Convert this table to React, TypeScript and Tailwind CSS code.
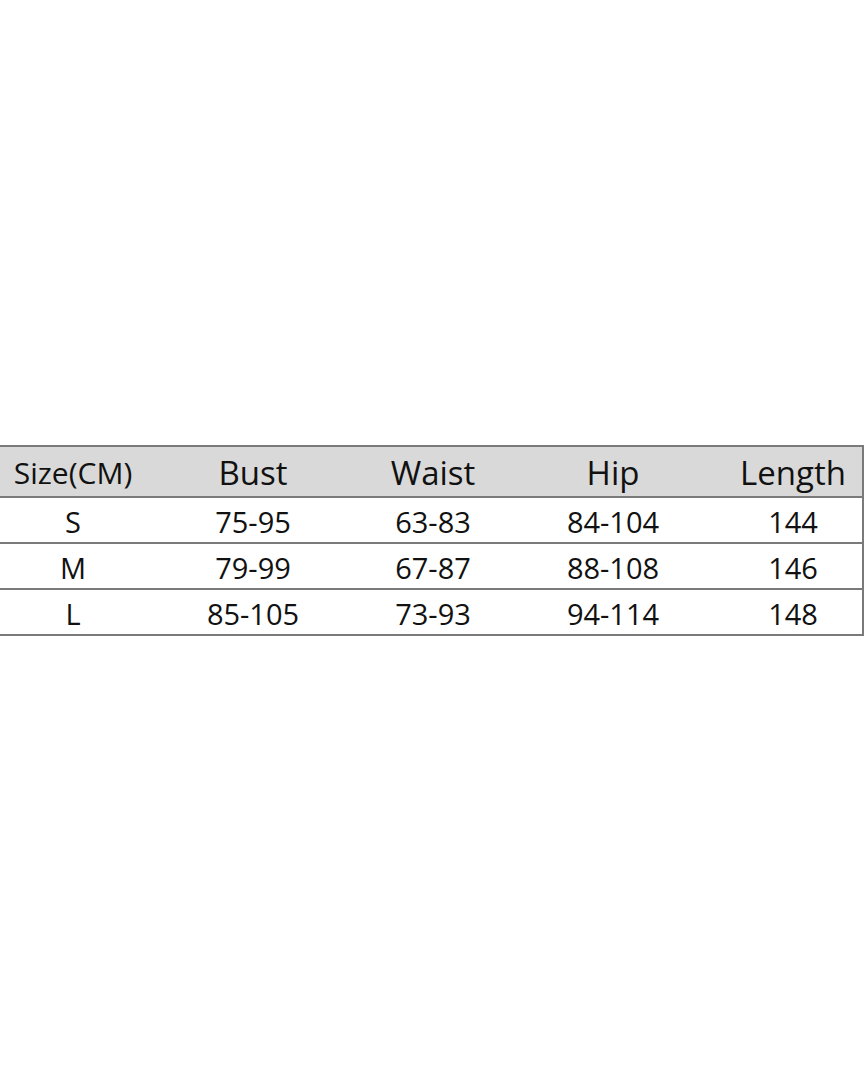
const headers = ["Bust", "Waist", "Hip", "Length"];

const rows = [
  ["S", "75-95", "63-83", "84-104", "144"],
  ["M", "79-99", "67-87", "88-108", "146"],
  ["L", "85-105", "73-93", "94-114", "148"],
];

export default function App() {
  return (
    <div
      className="flex min-h-[1080px] w-[864px] items-center bg-white text-[#111]"
      style={{ fontFamily: '"Open Sans", "Liberation Sans", sans-serif' }}
    >
      <div className="mt-[1px] w-[864px] overflow-hidden border-r-2 border-[#7a7a7a]">
        <div className="ml-[-17px] w-[900px]">
          <div className="grid h-[53px] grid-cols-5 items-center border-y-2 border-[#7a7a7a] bg-[#d9d9d9]">
            <div className="pt-[2px] text-center text-[30px] font-medium leading-none">Size(CM)</div>
            {headers.map((h) => (
              <div key={h} className="pt-[2px] text-center text-[33px] font-medium leading-none">
                {h}
              </div>
            ))}
          </div>
          {rows.map((row) => (
            <div
              key={row[0]}
              className="grid h-[46px] grid-cols-5 items-center border-b-2 border-[#7a7a7a]"
            >
              {row.map((cell, i) => (
                <div key={i} className="pt-[3px] text-center text-[29px] font-medium leading-none">
                  {cell}
                </div>
              ))}
            </div>
          ))}
        </div>
      </div>
    </div>
  );
}
